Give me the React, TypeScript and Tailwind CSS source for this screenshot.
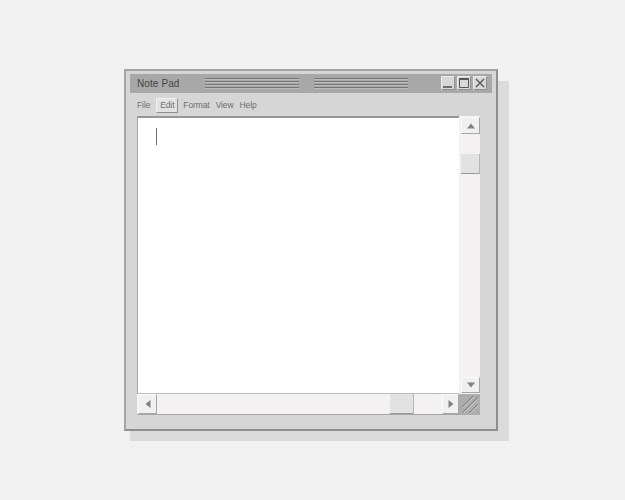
import { useState } from "react";

const menuItems = ["File", "Edit", "Format", "View", "Help"];

function TitleButton({ children }: { children: React.ReactNode }) {
  return (
    <button className="w-[14px] h-[14px] flex items-center justify-center bg-[#d8d8d8] border-t border-l border-t-[#ececec] border-l-[#ececec] border-b border-r border-b-[#929292] border-r-[#929292]">
      {children}
    </button>
  );
}

function Grooves() {
  return (
    <div className="w-[94px] flex flex-col gap-px">
      <div className="h-[2px] bg-[#777777] border-b border-b-[#bcbcbc]" />
      <div className="h-[2px] bg-[#777777] border-b border-b-[#bcbcbc]" />
      <div className="h-[2px] bg-[#777777] border-b border-b-[#bcbcbc]" />
      <div className="h-[2px] bg-[#777777] border-b border-b-[#bcbcbc]" />
    </div>
  );
}

function ScrollButton({ dir, className }: { dir: "up" | "down" | "left" | "right"; className: string }) {
  const points = {
    up: "1,7.5 5,2.5 9,7.5",
    down: "1,2.5 5,7.5 9,2.5",
    left: "7.5,1 2.5,5 7.5,9",
    right: "2.5,1 7.5,5 2.5,9",
  }[dir];
  return (
    <button className={`flex items-center justify-center shrink-0 bg-[#f1f0f0] border-b border-r border-b-[#a6a6a6] border-r-[#a6a6a6] border-t border-l border-t-[#fbfbfb] border-l-[#fbfbfb] ${className}`}>
      <svg width="10" height="10" viewBox="0 0 10 10">
        <polygon points={points} fill="#808080" />
      </svg>
    </button>
  );
}

export default function App() {
  const [active] = useState("Edit");

  return (
    <div className="w-[625px] h-[500px] bg-[#f1f1f1] pl-[124px] pt-[69px] overflow-hidden font-['Liberation_Sans',sans-serif]">
      <div className="relative w-[374px] h-[362px]">
        {/* drop shadow */}
        <div className="absolute left-[6px] top-[12px] w-[379px] h-[360px] bg-[#dbdbdb]" />

        <div className="relative w-full h-full bg-[#d6d6d6] border-2 border-[#8e8e8e] border-t-[#a3a3a3] border-l-[#a3a3a3] px-[3px] pt-[3px] flex flex-col">
          {/* title bar */}
          <div className="h-[19px] ml-[1px] mr-[1px] bg-[#a8a8a8] flex items-center pl-[7px] pr-[5px] shrink-0">
            <span className="w-[68px] text-[10px] tracking-[0.1px] text-[#444444] leading-none">Note Pad</span>
            <Grooves />
            <div className="w-[15px]" />
            <Grooves />
            <div className="ml-auto flex gap-[2px] -translate-y-px">
              <TitleButton>
                <svg width="12" height="12" viewBox="0 0 12 12">
                  <path d="M1 10h9" stroke="#555555" strokeWidth="1.6" />
                </svg>
              </TitleButton>
              <TitleButton>
                <svg width="12" height="12" viewBox="0 0 12 12" fill="none">
                  <path d="M1.5 1.5h9v9h-9z" stroke="#555555" />
                  <path d="M1.5 2.2h9" stroke="#555555" strokeWidth="1.5" />
                </svg>
              </TitleButton>
              <TitleButton>
                <svg width="12" height="12" viewBox="0 0 12 12">
                  <path d="M2 2l8 8M10 2l-8 8" stroke="#555555" strokeWidth="1.3" />
                </svg>
              </TitleButton>
            </div>
          </div>

          {/* menu */}
          <div className="h-[23px] flex items-center gap-[6px] pl-[8px] pt-[2px] shrink-0 text-[8.5px] tracking-[-0.1px] text-[#6e6e6e]">
            {menuItems.map((item) => (
              <span
                key={item}
                className={
                  item === active
                    ? "h-[15px] w-[22px] mr-[-1px] flex items-center justify-center bg-[#e2e2e2] border-r border-b border-r-[#8e8e8e] border-b-[#8e8e8e] border-t border-l border-t-[#f0f0f0] border-l-[#f0f0f0]"
                    : ""
                }
              >
                {item}
              </span>
            ))}
          </div>

          {/* editor */}
          <div className="ml-[8px] w-[343px] h-[299px] flex flex-col shrink-0">
            <div className="flex h-[278px] shrink-0">
              <div className="flex-1 bg-white border-t-2 border-l border-t-[#969696] border-l-[#a5a5a5] border-b border-b-[#bdbdbd] pl-[18px] pt-[10px]">
                <div className="w-px h-[17px] bg-[#777777]" />
              </div>
              <div className="w-[21px] bg-[#f3f1f2] flex flex-col shrink-0 pl-[2px] pt-px pb-px">
                <ScrollButton dir="up" className="h-[17px] w-full" />
                <div className="h-[20px] shrink-0" />
                <div className="h-[20px] shrink-0 bg-[#e2e2e2] border-b border-r border-b-[#9a9a9a] border-r-[#b5b5b5]" />
                <div className="flex-1" />
                <ScrollButton dir="down" className="h-[16px] w-full" />
              </div>
            </div>
            <div className="flex h-[21px] shrink-0">
              <div className="flex-1 flex bg-[#f3f1f2] pl-px border-b border-b-[#a6a6a6]">
                <ScrollButton dir="left" className="w-[19px] h-full" />
                <div className="w-[233px] shrink-0" />
                <div className="w-[24px] shrink-0 bg-[#e2e2e2] border-b border-r border-b-[#9a9a9a] border-r-[#b5b5b5]" />
                <div className="flex-1" />
                <ScrollButton dir="right" className="w-[17px] h-full" />
              </div>
              <div className="w-[21px] bg-[#adadad] shrink-0">
                <svg width="21" height="21" viewBox="0 0 21 21" fill="none">
                  <path d="M3 13L14 2M4 18L19 3M10 19L19 10" stroke="#7f7f7f" />
                  <path d="M4 14L15 3M5 19L20 4M11 20L20 11" stroke="#c6c6c6" />
                </svg>
              </div>
            </div>
          </div>
        </div>
      </div>
    </div>
  );
}
